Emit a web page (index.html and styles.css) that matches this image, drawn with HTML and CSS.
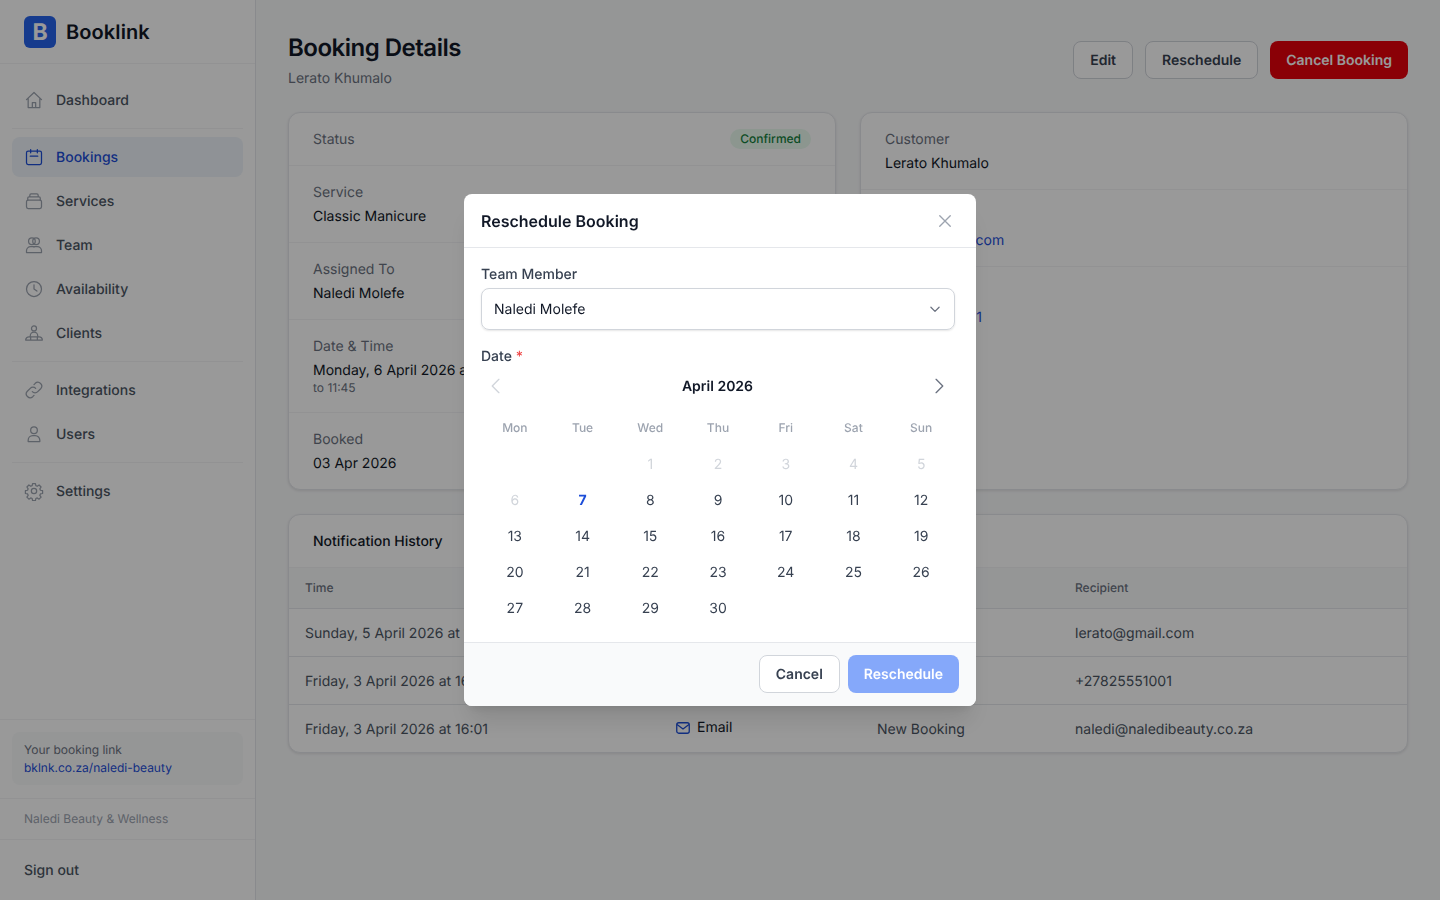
FILE: index.html
```html
<!DOCTYPE html>
<html lang="en">
<head>
<meta charset="utf-8">
<title>Booking Details</title>
<link rel="stylesheet" href="styles.css">
</head>
<body>
<div class="app">
  <aside class="sidebar">
    <div class="brand"><span class="logo">B</span><span class="brand-name">Booklink</span></div>
    <nav class="nav">
      <div class="nav-group">
        <a class="nav-item"><svg class="ico" viewBox="0 0 24 24"><path d="M3 11.500 12 3l9 8.500M5 9.500V21h14V9.500M10 21v-6h4v6"/></svg>Dashboard</a>
      </div>
      <div class="nav-group">
        <a class="nav-item active"><svg class="ico" viewBox="0 0 24 24"><rect x="3" y="5" width="18" height="16" rx="2"/><path d="M8 3v4M16 3v4M7.500 11h9"/></svg>Bookings</a>
        <a class="nav-item"><svg class="ico" viewBox="0 0 24 24"><rect x="3" y="11" width="18" height="10" rx="2"/><path d="M4.500 11V8.500a1.500 1.500 0 0 1 1.500-1.500h12a1.500 1.500 0 0 1 1.500 1.500V11M7 7V5a1.500 1.500 0 0 1 1.500-1.500h7A1.500 1.500 0 0 1 17 5v2"/></svg>Services</a>
        <a class="nav-item"><svg class="ico" viewBox="0 0 24 24"><circle cx="9.500" cy="7.500" r="4"/><circle cx="14.500" cy="7.500" r="4"/><path d="M3 21v-2a5 5 0 0 1 5-5h3.500a3 3 0 0 1 .5.500 3 3 0 0 1 .5-.500H16a5 5 0 0 1 5 5v2z"/></svg>Team</a>
        <a class="nav-item"><svg class="ico" viewBox="0 0 24 24"><circle cx="12" cy="12" r="9"/><path d="M12 7v5l3.500 2.500"/></svg>Availability</a>
        <a class="nav-item"><svg class="ico" viewBox="0 0 24 24"><circle cx="12" cy="6.500" r="3"/><path d="M7.500 17v-1.500a4.500 4.500 0 0 1 9 0V17M2 20.500a4 4 0 0 1 4-4h12a4 4 0 0 1 4 4zM8 17v3.500M16 17v3.500"/></svg>Clients</a>
      </div>
      <div class="nav-group">
        <a class="nav-item"><svg class="ico" viewBox="0 0 24 24"><path d="M10 14a4.500 4.500 0 0 0 6.500 0l3.500-3.500a4.600 4.600 0 0 0-6.500-6.500L12 5.500M14 10a4.500 4.500 0 0 0-6.500 0L4 13.500a4.600 4.600 0 0 0 6.500 6.500l1.500-1.500"/></svg>Integrations</a>
        <a class="nav-item"><svg class="ico" viewBox="0 0 24 24"><circle cx="12" cy="7.500" r="4"/><path d="M5 21v-1.500A5.500 5.500 0 0 1 10.500 14h3a5.500 5.500 0 0 1 5.500 5.500V21z"/></svg>Users</a>
      </div>
      <div class="nav-group">
        <a class="nav-item"><svg class="ico" viewBox="0 0 24 24"><path d="M10.300 3h3.400l.5 2.600 1.700.7 2.200-1.500 2.400 2.400-1.500 2.200.7 1.700 2.600.5v3.400l-2.600.5-.7 1.700 1.500 2.200-2.400 2.400-2.200-1.500-1.700.7-.5 2.600h-3.400l-.5-2.600-1.700-.7-2.200 1.500-2.400-2.400 1.500-2.200-.7-1.700-2.600-.5v-3.400l2.600-.5.700-1.700-1.500-2.200 2.400-2.400 2.200 1.500 1.700-.7z"/><circle cx="12" cy="12" r="3.200"/></svg>Settings</a>
      </div>
    </nav>
    <div class="side-foot">
      <div class="link-wrap"><div class="link-box"><div class="link-label">Your booking link</div><div class="link-url">bklnk.co.za/naledi-beauty</div></div></div>
      <div class="biz">Naledi Beauty &amp; Wellness</div>
      <div class="signout">Sign out</div>
    </div>
  </aside>
  <main class="main">
    <header class="page-head">
      <div>
        <h1 class="title">Booking Details</h1>
        <p class="subtitle">Lerato Khumalo</p>
      </div>
      <div class="actions">
        <button class="btn">Edit</button>
        <button class="btn">Reschedule</button>
        <button class="btn danger">Cancel Booking</button>
      </div>
    </header>
    <section class="cards">
      <div class="card">
        <div class="row row-status"><span class="label">Status</span><span class="badge">Confirmed</span></div>
        <div class="row"><div class="label">Service</div><div class="value">Classic Manicure</div></div>
        <div class="row"><div class="label">Assigned To</div><div class="value">Naledi Molefe</div></div>
        <div class="row row-date"><div class="label">Date &amp; Time</div><div class="value">Monday, 6 April 2026 at 11:00</div><div class="small">to 11:45</div></div>
        <div class="row last"><div class="label">Booked</div><div class="value">03 Apr 2026</div></div>
      </div>
      <div class="card">
        <div class="row"><div class="label">Customer</div><div class="value">Lerato Khumalo</div></div>
        <div class="row"><div class="label">Email</div><div class="value link">lerato@gmail.com</div></div>
        <div class="row last"><div class="label">Phone</div><div class="value link">+27825551001</div></div>
      </div>
    </section>
    <section class="card history">
      <h2 class="history-title">Notification History</h2>
      <table class="table">
        <colgroup><col class="c1"><col class="c2"><col class="c3"><col class="c4"></colgroup>
        <thead><tr><th>Time</th><th>Channel</th><th>Type</th><th>Recipient</th></tr></thead>
        <tbody>
          <tr><td>Sunday, 5 April 2026 at 10:00</td><td></td><td></td><td>lerato@gmail.com</td></tr>
          <tr><td>Friday, 3 April 2026 at 16:01</td><td></td><td></td><td>+27825551001</td></tr>
          <tr><td>Friday, 3 April 2026 at 16:01</td><td><span class="chan"><svg class="mail" viewBox="0 0 14 14"><rect x=".75" y="1.750" width="12.500" height="10.500" rx="2"/><path d="m1 3.500 6 4.500 6-4.500"/></svg>Email</span></td><td>New Booking</td><td>naledi@naledibeauty.co.za</td></tr>
        </tbody>
      </table>
    </section>
  </main>
</div>
<div class="overlay"></div>
<div class="modal">
  <div class="modal-head">
    <h3 class="modal-title">Reschedule Booking</h3>
    <svg class="close" viewBox="0 0 24 24"><path d="M5 5l14 14M19 5 5 19"/></svg>
  </div>
  <div class="modal-body">
    <div class="field-label">Team Member</div>
    <div class="select"><span>Naledi Molefe</span><svg class="chev" viewBox="0 0 24 24"><path d="m5 9 7 7 7-7"/></svg></div>
    <div class="field-label date-label">Date <span class="req">*</span></div>
    <div class="cal-nav">
      <svg class="arrow off" viewBox="0 0 24 24"><path d="M15.500 4 7.500 12l8 8"/></svg>
      <span class="month">April 2026</span>
      <svg class="arrow" viewBox="0 0 24 24"><path d="m8.500 4 8 8-8 8"/></svg>
    </div>
    <div class="cal-grid">
      <div class="dow">Mon</div><div class="dow">Tue</div><div class="dow">Wed</div><div class="dow">Thu</div><div class="dow">Fri</div><div class="dow">Sat</div><div class="dow">Sun</div>
      <div></div><div></div><div class="day off">1</div><div class="day off">2</div><div class="day off">3</div><div class="day off">4</div><div class="day off">5</div>
      <div class="day off">6</div><div class="day today">7</div><div class="day">8</div><div class="day">9</div><div class="day">10</div><div class="day">11</div><div class="day">12</div>
      <div class="day">13</div><div class="day">14</div><div class="day">15</div><div class="day">16</div><div class="day">17</div><div class="day">18</div><div class="day">19</div>
      <div class="day">20</div><div class="day">21</div><div class="day">22</div><div class="day">23</div><div class="day">24</div><div class="day">25</div><div class="day">26</div>
      <div class="day">27</div><div class="day">28</div><div class="day">29</div><div class="day">30</div>
    </div>
  </div>
  <div class="modal-foot">
    <button class="mbtn">Cancel</button>
    <button class="mbtn primary">Reschedule</button>
  </div>
</div>
</body>
</html>
```
FILE: styles.css
```css
* { box-sizing: border-box; }
html, body { margin: 0; height: 100%; }
body { font-family: Inter, "Liberation Sans", sans-serif; color: #111827; background: #f9fafb; font-size: 14px; overflow: hidden; text-rendering: geometricPrecision; }
button { font-family: inherit; text-rendering: geometricPrecision; }
.app { display: flex; height: 900px; }
.sidebar { width: 256px; flex: none; background: #fff; border-right: 1px solid #e5e7eb; display: flex; flex-direction: column; }
.brand { height: 64px; padding: 0 24px; display: flex; align-items: center; gap: 10px; border-bottom: 1px solid #f3f4f6; }
.logo { width: 32px; height: 32px; border-radius: 6px; background: #2563eb; color: #fff; font-weight: 700; font-size: 23px; display: flex; align-items: center; justify-content: center; }
.brand-name { font-size: 20px; font-weight: 600; letter-spacing: .1px; }
.nav { padding: 0 12px; flex: 1; }
.nav-group { padding: 8px 0; border-bottom: 1px solid #f3f4f6; display: flex; flex-direction: column; gap: 4px; }
.nav-group:nth-child(1) { padding-top: 16px; }
.nav-group:nth-child(4) { border-bottom: 0; }
.nav-item { height: 40px; padding: 0 12px; border-radius: 8px; display: flex; align-items: center; gap: 12px; color: #4b5563; font-weight: 500; font-size: 14px; }
.nav-item.active { background: #eef4fa; color: #1d4ed8; }
.ico { width: 20px; height: 20px; flex: none; fill: none; stroke: #9ca3af; stroke-width: 1.500; stroke-linecap: round; stroke-linejoin: round; }
.nav-item.active .ico { stroke: #1d4ed8; }
.side-foot { display: flex; flex-direction: column; }
.link-wrap { padding: 12px 12px 13px; border-top: 1px solid #f3f4f6; border-bottom: 1px solid #f3f4f6; }
.link-box { background: #f9fafb; border-radius: 8px; height: 53px; padding: 9px 12px; font-size: 12px; line-height: 18px; }
.link-label { color: #6b7280; }
.link-url { color: #1d4ed8; }
.biz { height: 41px; padding: 0 24px 2px; display: flex; align-items: center; font-size: 12px; color: #9ca3af; border-bottom: 1px solid #f3f4f6; }
.signout { height: 60px; padding: 0 24px; display: flex; align-items: center; color: #4b5563; font-weight: 500; }
.main { flex: 1; padding: 32px; min-width: 0; }
.page-head { display: flex; justify-content: space-between; align-items: flex-start; height: 56px; margin-bottom: 24px; }
.title { margin: 0; font-size: 24px; line-height: 32px; font-weight: 600; letter-spacing: -0.5px; }
.subtitle { margin: 5px 0 0; color: #6b7280; line-height: 20px; }
.actions { display: flex; gap: 12px; margin-top: 9px; }
.btn { height: 38px; padding: 0 16px; border: 1px solid #d1d5db; border-radius: 8px; background: #fff; color: #374151; font-size: 14px; font-weight: 600; }
.btn.danger { background: #e7000b; border: 0; color: #fff; }
.cards { display: grid; grid-template-columns: 548px 548px; gap: 24px; margin-bottom: 24px; }
.card { background: #fff; border: 1px solid #e5e7eb; border-radius: 12px; box-shadow: 0 1px 3px rgba(0,0,0,.1); overflow: hidden; height: 378px; }
.row { padding: 17px 24px 14px; border-bottom: 1px solid #f3f4f6; min-height: 77px; line-height: 20px; font-size: 14px; }
.row.last { border-bottom: 0; }
.row-status { min-height: 53px; display: flex; align-items: center; justify-content: space-between; padding: 0 24px; }
.row-date { padding-bottom: 16px; }
.label { color: #6b7280; margin-bottom: 4px; }
.row-status .label { margin: 0; padding-top: 2px; }
.value { color: #111827; }
.value.link { color: #1d4ed8; }
.small { font-size: 12px; line-height: 16px; margin-top: -1px; color: #6b7280; }
.badge { height: 20px; padding: 0 10px; border-radius: 10px; background: #e9fbef; color: #15803d; font-size: 12px; font-weight: 500; line-height: 20px; }
.history { height: 239px; }
.history-title { margin: 0; height: 52px; padding: 0 24px; display: flex; align-items: center; font-size: 14px; font-weight: 500; }
.table { width: 100%; border-collapse: collapse; table-layout: fixed; }
.c1 { width: 371px; } .c2 { width: 201px; } .c3 { width: 198px; }
th { height: 41px; padding: 0 16px 2px; background: #f9fafb; text-align: left; font-size: 12px; font-weight: 500; color: #6b7280; border-top: 1px solid #f3f4f6; border-bottom: 1px solid #e5e7eb; }
td { height: 48px; padding: 2px 16px 0; color: #4b5563; font-size: 14px; border-bottom: 1px solid #e5e7eb; }
tr:last-child td { border-bottom: 0; }
.chan { display: inline-flex; align-items: center; gap: 7px; color: #111827; position: relative; top: -1px; }
.mail { width: 14px; height: 14px; fill: none; stroke: #1d4ed8; stroke-width: 1.300; }
.overlay { position: fixed; inset: 0; background: rgba(0,0,0,.4); }
.modal { position: fixed; left: 464px; top: 194px; width: 512px; height: 512px; background: #fff; border-radius: 8px; box-shadow: 0 20px 25px -5px rgba(0,0,0,.1), 0 8px 10px -6px rgba(0,0,0,.1); overflow: hidden; display: flex; flex-direction: column; }
.modal-head { height: 54px; padding: 0 17px; display: flex; align-items: center; justify-content: space-between; border-bottom: 1px solid #e5e7eb; }
.modal-title { margin: 0; font-size: 16px; font-weight: 600; color: #111827; }
.close { width: 18px; height: 18px; margin-right: 5px; fill: none; stroke: #9ca3af; stroke-width: 1.800; stroke-linecap: round; }
.modal-body { flex: 1; padding: 16px 21px 0 17px; }
.field-label { height: 20px; padding-top: 1px; font-size: 14px; line-height: 20px; font-weight: 500; color: #374151; }
.select { height: 42px; margin-top: 4px; border: 1px solid #d1d5db; border-radius: 8px; box-shadow: 0 1px 2px rgba(0,0,0,.1); display: flex; align-items: center; justify-content: space-between; padding: 0 12px; color: #111827; }
.chev { width: 14px; height: 14px; fill: none; stroke: #6b7280; stroke-width: 2.200; stroke-linecap: round; stroke-linejoin: round; }
.date-label { margin-top: 16px; }
.req { color: #ef4444; }
.cal-nav { height: 40px; display: flex; align-items: center; justify-content: space-between; padding: 0 6px 0 5px; }
.month { font-weight: 600; font-size: 14px; color: #111827; }
.arrow { width: 20px; height: 20px; fill: none; stroke: #6b7280; stroke-width: 1.600; stroke-linecap: round; stroke-linejoin: round; }
.arrow.off { stroke: #d1d5db; }
.cal-grid { display: grid; grid-template-columns: repeat(7, 1fr); grid-template-rows: 37px; grid-auto-rows: 36px; margin-top: 3px; }
.dow { display: flex; align-items: center; justify-content: center; padding-bottom: 1px; font-size: 12px; color: #9ca3af; font-weight: 500; }
.day { display: flex; align-items: center; justify-content: center; font-size: 14px; color: #374151; }
.day.off { color: #d1d5db; }
.day.today { color: #1d4ed8; font-weight: 700; }
.modal-foot { height: 64px; background: #f9fafb; border-top: 1px solid #e5e7eb; display: flex; justify-content: flex-end; align-items: center; gap: 8px; padding: 0 17px 2px; }
.mbtn { height: 38px; padding: 2px 16px 0; border: 1px solid #d1d5db; border-radius: 8px; background: #fff; color: #374151; font-size: 14px; font-weight: 600; }
.mbtn.primary { background: #85a8fa; border: 0; color: #fff; }
```
